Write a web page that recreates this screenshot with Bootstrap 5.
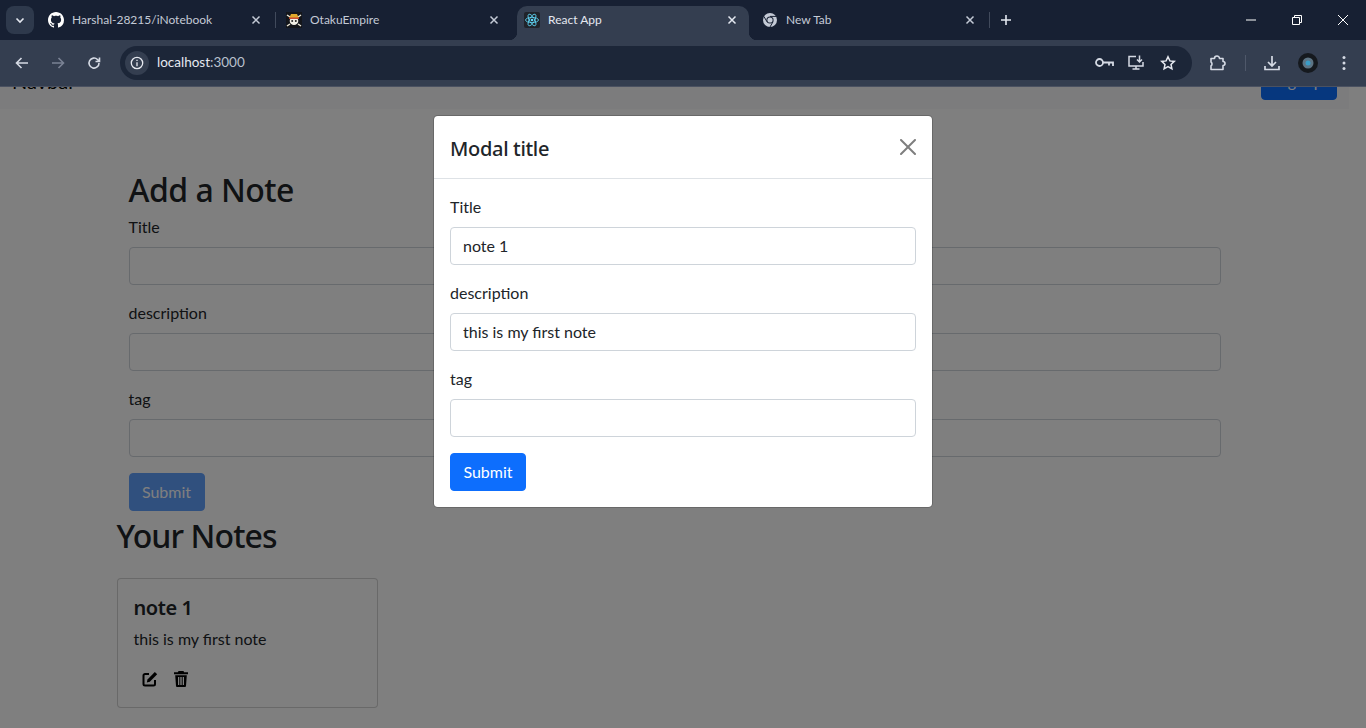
<!DOCTYPE html>
<html lang="en">
<head>
<meta charset="UTF-8">
<title>React App</title>
<link href="https://cdn.jsdelivr.net/npm/bootstrap@5.3.0/dist/css/bootstrap.min.css" rel="stylesheet">
<style>
html, body { height: 100%; overflow: hidden; }
body { font-family: Lato, "Noto Sans", sans-serif; display: flex; flex-direction: column; }

/* browser frame */
.tabstrip { height: 40px; background: #172033; color: #c4cad6; font-size: 12px; flex-shrink: 0; }
.tab-list-btn { width: 28px; height: 28px; margin: 6px 4px 0 6px; border-radius: 8px; background: #2e394c; }
.tab-item { width: 238px; height: 34px; margin-top: 6px; padding: 0 15px 6px 10px; }
.tab-active { width: 232px; margin-left: 3px; margin-right: 3px; padding: 0 12px 6px 7px; position: relative; background: #343e50; border-radius: 10px 10px 0 0; color: #e4e8f0; }
.tab-active::before, .tab-active::after { content: ""; position: absolute; bottom: 0; width: 8px; height: 8px; }
.tab-active::before { left: -8px; background: radial-gradient(circle at 0 0, transparent 8px, #343e50 8.5px); }
.tab-active::after { right: -8px; background: radial-gradient(circle at 100% 0, transparent 8px, #343e50 8.5px); }
.tab-sep { width: 1px; height: 16px; background: #414a5c; margin: 12px 0 0 -1px; }
.tab-name { flex: 1; margin-left: 8px; white-space: nowrap; }
.new-tab { margin-left: 10px; }
.win-btn { width: 46px; }
.toolbar { height: 47px; background: #343e50; border-bottom: 1px solid #4a5161; flex-shrink: 0; padding: 6px 0 0 4px; }
.toolbar-btn { width: 36px; margin-bottom: 7px; }
.omnibox { width: 1072px; height: 34px; margin-left: 8px; background: #1c2638; border-radius: 17px; color: #e6e9f0; font-size: 13.5px; padding: 0 8px 0 5px; }
.omni-url { padding-bottom: 2px; }
.info-dot { width: 24px; height: 24px; border-radius: 50%; background: #343e50; margin-right: 8px; }
.omni-icon { width: 32px; }
.url-port { color: #b9c0cd; }
.tool-ext { margin: 0 0 7px 17px; }
.tool-sep { height: 16px; width: 1px; background: #4f586a; margin: 9px 0 0 18px; }
.tool-dl { margin: 0 0 7px 17px; }
.tool-avatar { margin: 0 0 7px 17px; }
.tool-dots { margin: 0 0 7px 24px; }

/* page under the modal */
.page-view { flex: 1; position: relative; overflow: hidden; background: #fff; }
.page-scroll { width: 1349px; margin-top: -34px; color: #212529; }
.nav-signup { width: 76px; padding-left: 0; padding-right: 0; }
.submit-btn { width: 76px; padding-left: 0; padding-right: 0; }
.add-note { margin-top: 60px; margin-bottom: 6px; }
.notes-row { margin-top: 0; }
.page-head { font-family: "Noto Sans", sans-serif; font-weight: 500; letter-spacing: -.016em; padding-top: 2px; margin-bottom: 6px; }
.notes-head { letter-spacing: -.028em; padding-top: 0; margin-bottom: 8px; }
.note-card { margin-top: 14px; margin-bottom: 16px; }
.note-title { font-family: "Noto Sans", sans-serif; font-weight: 600; letter-spacing: -.022em; padding-top: 1px; margin-bottom: 7px; }
.fake-modal { position: absolute; display: block; overflow: hidden; }
.modal-backdrop { position: absolute; width: 100%; height: 100%; }
.modal-title { font-family: "Noto Sans", sans-serif; font-weight: 500; letter-spacing: -.016em; margin-top: 3px; }
.modal-header { height: 63px; }
.modal-content { border-radius: .3rem; }
.btn-close { width: 1em; height: 1em; }
.form-control { border-color: #ced4da; border-radius: .25rem; }
.btn { border-radius: .25rem; }
.card { border-radius: .25rem; }
.note-icon { width: 16px; height: 16px; }
.note-actions { padding: 4px 8px 4px; gap: 15px; }
</style>
</head>
<body>

<div class="tabstrip d-flex">
  <div class="tab-list-btn d-flex align-items-center justify-content-center">
    <svg width="10" height="10" viewBox="0 0 10 10"><path d="M1.5 3.5 5 7l3.5-3.5" fill="none" stroke="#e4e8f0" stroke-width="1.6"/></svg>
  </div>
  <div class="tab-item d-flex align-items-center">
    <svg width="16" height="16" viewBox="0 0 16 16"><path fill="#fff" d="M8 0C3.58 0 0 3.58 0 8c0 3.54 2.29 6.53 5.47 7.59.4.07.55-.17.55-.38 0-.19-.01-.82-.01-1.49-2.01.37-2.53-.49-2.69-.94-.09-.23-.48-.94-.82-1.13-.28-.15-.68-.52-.01-.53.63-.01 1.08.58 1.23.82.72 1.21 1.87.87 2.33.66.07-.52.28-.87.51-1.07-1.78-.2-3.64-.89-3.64-3.95 0-.87.31-1.59.82-2.15-.08-.2-.36-1.02.08-2.12 0 0 .67-.21 2.2.82.64-.18 1.32-.27 2-.27s1.36.09 2 .27c1.53-1.04 2.2-.82 2.2-.82.44 1.1.16 1.92.08 2.12.51.56.82 1.27.82 2.15 0 3.07-1.87 3.75-3.65 3.95.29.25.54.73.54 1.48 0 1.07-.01 1.93-.01 2.2 0 .21.15.46.55.38A8.01 8.01 0 0 0 16 8c0-4.42-3.58-8-8-8z"/></svg>
    <span class="tab-name">Harshal-28215/iNotebook</span>
    <svg width="10" height="10" viewBox="0 0 10 10"><path d="M1.5 1.5l7 7m0-7-7 7" stroke="#c4cad6" stroke-width="1.5"/></svg>
  </div>
  <div class="tab-sep"></div>
  <div class="tab-item d-flex align-items-center">
    <svg width="16" height="16" viewBox="0 0 16 16"><rect width="16" height="16" fill="#14161b"/><path d="M1 3l3 2M15 3l-3 2M1 14l3-2M15 14l-3-2" stroke="#eee9d8" stroke-width="1.5"/><ellipse cx="8" cy="9" rx="4.300" ry="4" fill="#f1efe6"/><path d="M3 6.500h10L11 2H5z" fill="#e0a92c"/><rect x="3" y="5.500" width="10" height="1.400" fill="#c8402c"/><circle cx="6.200" cy="9" r="1" fill="#222"/><circle cx="9.800" cy="9" r="1" fill="#222"/></svg>
    <span class="tab-name">OtakuEmpire</span>
    <svg width="10" height="10" viewBox="0 0 10 10"><path d="M1.5 1.5l7 7m0-7-7 7" stroke="#c4cad6" stroke-width="1.5"/></svg>
  </div>
  <div class="tab-item tab-active d-flex align-items-center">
    <svg width="16" height="16" viewBox="0 0 16 16"><rect width="16" height="16" rx="2" fill="#20232a"/><g fill="none" stroke="#61dafb" stroke-width=".8"><ellipse cx="8" cy="8" rx="6.5" ry="2.6"/><ellipse cx="8" cy="8" rx="6.5" ry="2.6" transform="rotate(60 8 8)"/><ellipse cx="8" cy="8" rx="6.5" ry="2.6" transform="rotate(120 8 8)"/></g><circle cx="8" cy="8" r="1.3" fill="#61dafb"/></svg>
    <span class="tab-name">React App</span>
    <svg width="10" height="10" viewBox="0 0 10 10"><path d="M1.5 1.5l7 7m0-7-7 7" stroke="#e4e8f0" stroke-width="1.5"/></svg>
  </div>
  <div class="tab-item d-flex align-items-center">
    <svg width="16" height="16" viewBox="0 0 16 16"><circle cx="8" cy="8" r="7" fill="#c4cad6"/><circle cx="8" cy="8" r="3.600" fill="#172033"/><circle cx="8" cy="8" r="2.600" fill="#c4cad6"/><path d="M8 4.400h6.400M5 9.800 1.900 4.400M11 9.800l-3.200 5.500" stroke="#172033" stroke-width="1"/></svg>
    <span class="tab-name">New Tab</span>
    <svg width="10" height="10" viewBox="0 0 10 10"><path d="M1.5 1.5l7 7m0-7-7 7" stroke="#c4cad6" stroke-width="1.5"/></svg>
  </div>
  <div class="tab-sep"></div>
  <div class="new-tab d-flex align-items-center flex-grow-1">
    <svg width="12" height="12" viewBox="0 0 12 12"><path d="M6 1v10M1 6h10" stroke="#e4e8f0" stroke-width="1.6"/></svg>
  </div>
  <div class="win-btn d-flex align-items-center justify-content-center"><svg width="12" height="12" viewBox="0 0 12 12"><path d="M1 6h10" stroke="#fff"/></svg></div>
  <div class="win-btn d-flex align-items-center justify-content-center"><svg width="12" height="12" viewBox="0 0 12 12"><path d="M1.500 3.500h7v7h-7zM3.500 3.500v-2h7v7h-2" fill="none" stroke="#fff"/></svg></div>
  <div class="win-btn d-flex align-items-center justify-content-center"><svg width="12" height="12" viewBox="0 0 12 12"><path d="M1 1l10 10m0-10L1 11" stroke="#fff"/></svg></div>
</div>

<div class="toolbar d-flex">
  <div class="toolbar-btn d-flex align-items-center justify-content-center"><svg width="16" height="16" viewBox="0 0 16 16"><path d="M14 8H3M7.500 3 2.500 8l5 5" fill="none" stroke="#d5dae4" stroke-width="1.600"/></svg></div>
  <div class="toolbar-btn d-flex align-items-center justify-content-center"><svg width="16" height="16" viewBox="0 0 16 16"><path d="M2 8h11M8.500 3l5 5-5 5" fill="none" stroke="#7a8294" stroke-width="1.600"/></svg></div>
  <div class="toolbar-btn d-flex align-items-center justify-content-center"><svg width="16" height="16" viewBox="0 0 16 16"><path d="M13 8a5 5 0 1 1-1.500-3.500L13.500 6.500M13.500 2.500v4h-4" fill="none" stroke="#d5dae4" stroke-width="1.600"/></svg></div>
  <div class="omnibox d-flex align-items-center">
    <div class="info-dot d-flex align-items-center justify-content-center"><svg width="14" height="14" viewBox="0 0 14 14"><circle cx="7" cy="7" r="5.700" fill="none" stroke="#e6e9f0" stroke-width="1.300"/><path d="M7 6.200v4M7 3.700v1.300" stroke="#e6e9f0" stroke-width="1.300"/></svg></div>
    <span class="omni-url flex-grow-1">localhost<span class="url-port">:3000</span></span>
    <div class="omni-icon d-flex justify-content-center"><svg width="19" height="12" viewBox="0 0 19 12"><circle cx="4.500" cy="5.500" r="3.500" fill="none" stroke="#d5dae4" stroke-width="1.800"/><path d="M8 5.500h10v3.500M14 5.500v3" fill="none" stroke="#d5dae4" stroke-width="1.800"/></svg></div>
    <div class="omni-icon d-flex justify-content-center"><svg width="18" height="18" viewBox="0 0 18 18"><path d="M9 2.500H2v9.500h14V8M5.500 15h7M9 12v3" fill="none" stroke="#d5dae4" stroke-width="1.500"/><path d="M12.500 1.500v6M10 5.500l2.500 2.500L15 5.500" fill="none" stroke="#d5dae4" stroke-width="1.500"/></svg></div>
    <div class="omni-icon d-flex justify-content-center"><svg width="16" height="16" viewBox="0 0 16 16"><path d="M8 1.800l1.900 4.100 4.400.5-3.300 3 .9 4.400L8 11.600l-3.900 2.200.9-4.400-3.300-3 4.400-.5z" fill="none" stroke="#e6e9f0" stroke-width="1.500"/></svg></div>
  </div>
  <div class="tool-ext d-flex align-items-center"><svg width="18" height="18" viewBox="0 0 18 18"><path d="M2 4.500h3.500a2.500 2.500 0 0 1 5 0H14v3a2 2 0 0 1 0 4v4H2v-3.500a2.500 2.500 0 0 0 0-4z" fill="none" stroke="#d5dae4" stroke-width="1.600" stroke-linejoin="round"/></svg></div>
  <div class="tool-sep"></div>
  <div class="tool-dl d-flex align-items-center"><svg width="18" height="18" viewBox="0 0 18 18"><path d="M9 2v10M5 8l4 4 4-4M2 12v3.500h14V12" fill="none" stroke="#d5dae4" stroke-width="1.700"/></svg></div>
  <div class="tool-avatar d-flex align-items-center"><svg width="20" height="20" viewBox="0 0 20 20"><circle cx="10" cy="10" r="10" fill="#15191e"/><circle cx="10" cy="10" r="5.500" fill="#5d7484"/><circle cx="10" cy="10" r="2.500" fill="#3a9cc6"/></svg></div>
  <div class="tool-dots d-flex align-items-center"><svg width="4" height="16" viewBox="0 0 4 16"><circle cx="2" cy="2.500" r="1.500" fill="#d5dae4"/><circle cx="2" cy="8" r="1.500" fill="#d5dae4"/><circle cx="2" cy="13.500" r="1.500" fill="#d5dae4"/></svg></div>
</div>

<div class="page-view">
  <div class="page-scroll">
    <nav class="navbar navbar-expand-lg bg-body-tertiary">
      <div class="container-fluid">
        <a class="navbar-brand" href="#">Navbar</a>
        <a class="btn btn-primary nav-signup" href="#">Signup</a>
      </div>
    </nav>
    <div class="container">
      <div class="container add-note">
        <h2 class="page-head">Add a Note</h2>
        <form>
          <div class="mb-3"><label class="form-label">Title</label><input type="text" class="form-control"></div>
          <div class="mb-3"><label class="form-label">description</label><input type="text" class="form-control"></div>
          <div class="mb-3"><label class="form-label">tag</label><input type="text" class="form-control"></div>
          <button type="button" class="btn btn-primary submit-btn disabled">Submit</button>
        </form>
      </div>
      <div class="row notes-row">
        <h2 class="page-head notes-head">Your Notes</h2>
        <div class="col-md-3">
          <div class="card note-card">
            <div class="card-body">
              <h5 class="card-title note-title">note 1</h5>
              <p class="card-text">this is my first note</p>
              <div class="note-actions d-flex">
                <svg class="note-icon" viewBox="0 0 16 16"><path d="M7 3H3a1.500 1.500 0 0 0-1.500 1.500v8.500A1.500 1.500 0 0 0 3 14.500h8.500A1.500 1.500 0 0 0 13 13V9" fill="none" stroke="#000" stroke-width="2"/><path d="M5.500 8.500 12.800.9l2.400 2.400-7.400 7.500-3 .6z" fill="#000"/></svg>
                <svg class="note-icon" viewBox="0 0 16 16"><path d="M5.500 0h5l.6 1.300H15v1.900H1V1.300h3.900zM2.200 4.300h11.600L13 15a1 1 0 0 1-1 1H4a1 1 0 0 1-1-1zM5 6v8h1.300V6zm2.300 0v8h1.400V6zm2.400 0v8H11V6z" fill="#000" fill-rule="evenodd"/></svg>
              </div>
            </div>
          </div>
        </div>
      </div>
    </div>
  </div>

  <div class="modal-backdrop fade show"></div>
  <div class="modal fake-modal show">
    <div class="modal-dialog">
      <div class="modal-content">
        <div class="modal-header">
          <h1 class="modal-title fs-5">Modal title</h1>
          <button type="button" class="btn-close" aria-label="Close"></button>
        </div>
        <div class="modal-body">
          <form>
            <div class="mb-3"><label class="form-label">Title</label><input type="text" class="form-control" value="note 1"></div>
            <div class="mb-3"><label class="form-label">description</label><input type="text" class="form-control" value="this is my first note"></div>
            <div class="mb-3"><label class="form-label">tag</label><input type="text" class="form-control"></div>
            <button type="button" class="btn btn-primary submit-btn">Submit</button>
          </form>
        </div>
      </div>
    </div>
  </div>
</div>

<script src="https://cdn.jsdelivr.net/npm/bootstrap@5.3.0/dist/js/bootstrap.bundle.min.js"></script>
</body>
</html>
